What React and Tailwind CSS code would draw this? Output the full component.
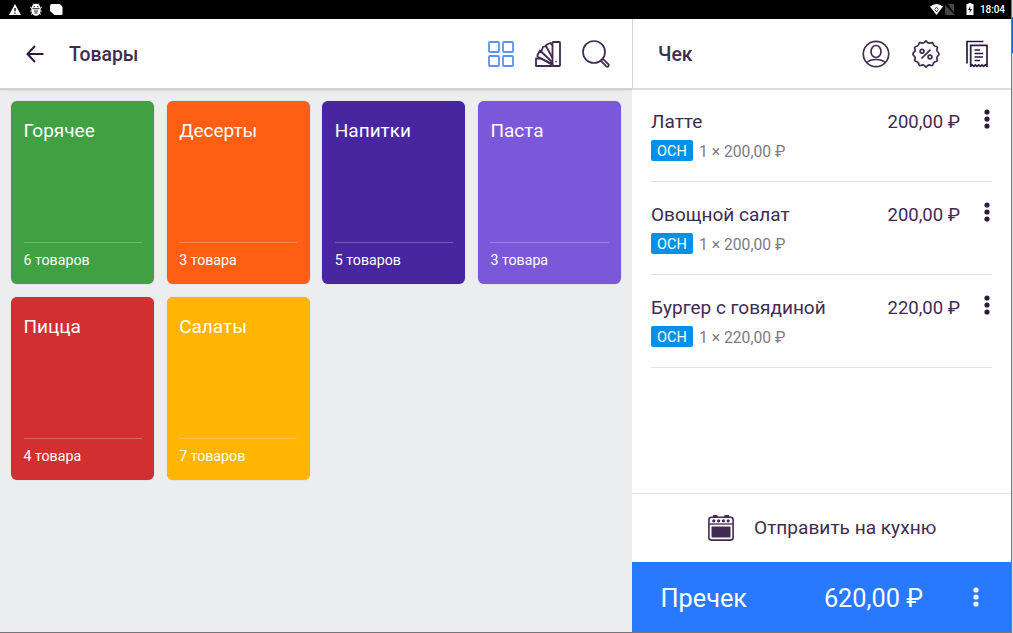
const categories = [
  { name: "Горячее", count: "6 товаров", color: "bg-[#3fa142]" },
  { name: "Десерты", count: "3 товара", color: "bg-[#ff5e14]" },
  { name: "Напитки", count: "5 товаров", color: "bg-[#47269f]" },
  { name: "Паста", count: "3 товара", color: "bg-[#7a58d8]" },
  { name: "Пицца", count: "4 товара", color: "bg-[#d23030]" },
  { name: "Салаты", count: "7 товаров", color: "bg-[#ffb502]" },
];

const receipt = [
  { name: "Латте", price: "200,00 ₽" },
  { name: "Овощной салат", price: "200,00 ₽" },
  { name: "Бургер с говядиной", price: "220,00 ₽" },
];

function StatusBar() {
  return (
    <div className="h-[19px] shrink-0 bg-black flex items-center justify-between pl-[9px] pr-[6px] text-white">
      <div className="flex items-center">
        <svg width="12" height="11" viewBox="0 0 12 11">
          <path d="M6 0L12 11H0Z" fill="#fff" />
          <path d="M6 4V7.2M6 8.4V9.7" stroke="#000" strokeWidth="1.3" />
        </svg>
        <svg className="ml-[9px]" width="12" height="13" viewBox="0 0 12 13">
          <path d="M3 .5L4.5 2M9 .5L7.5 2M.3 4.5L2 5.5M11.7 4.5L10 5.5M.3 8H11.7M1 11.5L3 10M11 11.5L9 10" stroke="#fff" strokeWidth="1" />
          <path d="M1.5 5A4.5 4.2 0 0 1 10.5 5V8.5A4.5 4.2 0 0 1 1.5 8.5Z" fill="#fff" />
          <path d="M3.5 3.7H5M7 3.7H8.5M2.5 5.7H9.5M4 8H8M4.5 10H7.5" stroke="#000" strokeWidth=".9" />
        </svg>
        <svg className="ml-2" width="13" height="11" viewBox="0 0 13 11">
          <path d="M2 0H10L12.5 3V9.5Q12.5 11 11 11H4.5L0 7V2Q0 0 2 0Z" fill="#fff" />
        </svg>
      </div>
      <div className="flex items-center">
        <svg width="13" height="11" viewBox="0 0 13 11">
          <path d="M0 2.5Q6.5 -2.5 13 2.5L6.5 11Z" fill="#fff" />
          <path d="M6.5 3L4.8 5.5L6.5 8L8.2 5.5Z" fill="none" stroke="#333" strokeWidth=".8" />
        </svg>
        <svg className="ml-0.5" width="10" height="11" viewBox="0 0 10 11">
          <path d="M0 1L10 11H1Q0 11 0 10ZM3 0H9V9Z" fill="#464646" />
        </svg>
        <svg className="ml-[11px] -mt-0.5" width="8" height="12" viewBox="0 0 8 12">
          <path d="M2.5 0H5.5V1H7.5V12H.5V1H2.5Z" fill="#fff" />
          <path d="M4.5 3L2 7H4L3.5 10L6 6H4Z" fill="#000" />
        </svg>
        <span className="ml-1.5 w-[25px] text-[10px] leading-none tracking-[-0.1px] font-medium whitespace-nowrap">18:04</span>
      </div>
    </div>
  );
}

function BackIcon() {
  return (
    <svg width="18" height="18" viewBox="0 0 18 18" fill="none" stroke="#2c1b3d" strokeWidth="2">
      <path d="M17.5 9H1.5M9 1L1.5 9L9 17" />
    </svg>
  );
}

function GridIcon() {
  return (
    <svg width="26" height="26" viewBox="0 0 26 26" fill="none" stroke="#5b93f0" strokeWidth="1.8">
      <rect x="1" y="1" width="10" height="10" rx="1" />
      <rect x="15" y="1" width="10" height="10" rx="1" />
      <rect x="1" y="15" width="10" height="10" rx="1" />
      <rect x="15" y="15" width="10" height="10" rx="1" />
    </svg>
  );
}

function PaletteIcon() {
  return (
    <svg width="26" height="26" viewBox="0 0 26 26" fill="none" stroke="#412b50" strokeWidth="1.8" strokeLinejoin="round">
      <rect x="17.5" y="1" width="7.5" height="24" rx=".7" />
      <path d="M17.5 25H1V17.5H6L17.5 24" />
      <path d="M2.5 16V14L5 9.5L16.5 20.5L17.5 23L3 16" />
      <path d="M6.5 10L8 6L11 5L17.5 17" />
      <path d="M10.5 5L12 3.5L15.500 2L17.5 4" />
      <circle cx="21.1" cy="20.8" r=".8" fill="#412b50" stroke="none" />
    </svg>
  );
}

function SearchIcon() {
  return (
    <svg width="28" height="28" viewBox="0 0 28 28" fill="none" stroke="#412b50" strokeWidth="1.7">
      <circle cx="12" cy="12" r="11" />
      <path d="M18.7 20.7L20.7 18.7L26.5 24.3Q27.2 25.4 26.3 26.3Q25.3 27.2 24.3 26.3Z" />
    </svg>
  );
}

function UserIcon() {
  return (
    <svg width="28" height="28" viewBox="0 0 28 28" fill="none" stroke="#412b50" strokeWidth="1.7">
      <circle cx="14" cy="14" r="12.7" />
      <ellipse cx="14" cy="11.5" rx="5" ry="6" />
      <path d="M5 22.5Q8 19.5 14 19.5T23 22.5" />
    </svg>
  );
}

function DiscountIcon() {
  return (
    <svg width="28" height="28" viewBox="0 0 28 28" fill="none" stroke="#412b50" strokeWidth="1.7" strokeLinejoin="round">
      <path d="M14 .9Q16 3.3 17.4 3.1Q19 2.5 20.6 2.6Q21.2 5.3 22.6 6Q24.8 6.5 25.4 7.4Q24.7 9.8 25 11Q27 13 27.1 14Q26.8 15.2 25 17Q24.7 18.3 25.4 20.6Q24.5 21.7 22.5 22Q21.3 22.8 20.6 25.4Q19.4 25.7 17.2 24.9Q15.8 25.2 14 27.1Q12.3 25 10.8 24.9Q8.8 25.8 7.4 25.4Q6.8 23 5.5 22Q3.3 21.6 2.6 20.6Q3.3 18.5 3 17Q1.2 15.3 .9 14Q1.2 12.6 3 11Q3.3 9.5 2.6 7.4Q3.2 6.5 5.4 6Q6.8 5.2 7.4 2.6Q8.8 2.4 10.6 3.1Q12 3.2 14 .9Z" />
      <path d="M18.5 9.7L9.5 18.5" />
      <circle cx="10" cy="11.2" r="1.9" />
      <circle cx="18" cy="17" r="1.9" />
    </svg>
  );
}

function ReceiptIcon() {
  return (
    <svg width="22" height="28" viewBox="0 0 22 28" fill="none" stroke="#2c1b3d" strokeWidth="1.7">
      <path d="M1 23.5V1.5H17.5" />
      <path d="M4.7 27V5.3H21V27M4.7 26L6.2 24.8L7.8 26.3L9.4 24.8L11 26.3L12.7 24.8L14.3 26.3L16 24.8L17.6 26.3L19.3 24.8L21 26" />
      <path d="M8.5 10H14M8.5 13.5H17M8.5 17H17M8.5 20.5H14" />
    </svg>
  );
}

function OvenIcon() {
  return (
    <svg width="26" height="26" viewBox="0 0 26 26" fill="none" stroke="#412b50" strokeWidth="1.6">
      <rect x=".9" y="2.2" width="24.2" height="22.9" rx="2.5" />
      <path d="M5 1H9.5M16.5 1H21" strokeWidth="2" />
      <path d="M1 9H25" strokeWidth="1.3" />
      <g fill="#412b50" stroke="none">
        <circle cx="5.8" cy="5.8" r="1.6" />
        <circle cx="10.6" cy="5.8" r="1.6" />
        <circle cx="15.4" cy="5.8" r="1.6" />
        <circle cx="20.2" cy="5.8" r="1.6" />
        <rect x="3.5" y="11.5" width="19" height="11" rx="1" />
      </g>
    </svg>
  );
}

function Dots({ className }) {
  return (
    <svg className={className} width="6" height="20" viewBox="0 0 6 20" fill="currentColor">
      <circle cx="3" cy="3" r="2.6" />
      <circle cx="3" cy="10" r="2.6" />
      <circle cx="3" cy="17" r="2.6" />
    </svg>
  );
}

function CategoryCard({ name, count, color }) {
  return (
    <div className={`${color} h-[183px] rounded-[6px] px-[12.5px] flex flex-col justify-between text-white shadow-[0_0_1px_rgba(0,0,0,0.3)]`}>
      <div className="pt-[18px] text-[19px] leading-6">{name}</div>
      <div className="h-[42px] border-t border-white/25 pt-[7px] text-[14.2px] leading-5">{count}</div>
    </div>
  );
}

function ReceiptRow({ name, price }) {
  return (
    <div className="h-[93px] border-b border-[#e2e2e4] flex justify-between">
      <div className="pt-[21px]">
        <div className="text-[19px] leading-6">{name}</div>
        <div className="mt-[5px] flex items-center">
          <span className="w-[42px] h-[21px] rounded-[2px] bg-[#0290e8] text-white text-[14.5px] leading-[23px] text-center">ОСН</span>
          <span className="ml-1.5 pt-[3px] text-[15.7px] leading-5 text-[#817987]">1 × {price}</span>
        </div>
      </div>
      <div className="flex">
        <div className="pt-[21px] text-[18.5px] leading-6">{price}</div>
        <Dots className="mt-[19.5px] ml-6 mr-0.5 text-[#2c1b3d]" />
      </div>
    </div>
  );
}

export default function App() {
  return (
    <div className="w-[1013px] h-[633px] flex overflow-hidden bg-[#dededf] font-['Roboto',sans-serif] text-[#412b50]">
      <div className="w-[1012px] border-r border-b border-[#77777a] flex flex-col">
        <StatusBar />
        <div className="flex-1 flex min-h-0">
          {/* Catalog */}
          <main className="w-[632px] shrink-0 bg-[#ebedef] flex flex-col">
            <header className="h-[71px] shrink-0 bg-white border-b-2 border-[#cfd0d2] shadow-[0_1px_2px_rgba(0,0,0,0.08)] pl-[26px] pr-[22px] flex items-center">
              <BackIcon />
              <h1 className="ml-[25px] pt-0.5 text-[19.4px] leading-6 font-medium">Товары</h1>
              <div className="ml-auto flex items-center gap-[21px]">
                <GridIcon />
                <PaletteIcon />
                <SearchIcon />
              </div>
            </header>
            <div className="grid grid-cols-4 gap-x-[12.6px] gap-y-[13px] pl-[11px] pr-[11px] pt-[11px]">
              {categories.map((c) => (
                <CategoryCard key={c.name} {...c} />
              ))}
            </div>
          </main>

          {/* Receipt */}
          <aside className="flex-1 bg-white flex flex-col">
            <header className="h-[71px] shrink-0 border-b-2 border-l border-b-[#dcdcde] border-l-[#d4d4d6] pl-[25px] pr-[23.5px] flex items-center">
              <h2 className="pt-0.5 text-[19.4px] leading-6 font-medium">Чек</h2>
              <div className="ml-auto flex items-center">
                <UserIcon />
                <span className="ml-[22px]"><DiscountIcon /></span>
                <span className="ml-[26px]"><ReceiptIcon /></span>
              </div>
            </header>
            <div className="flex-1 pl-[19px] pr-[19px] -mt-px">
              {receipt.map((r) => (
                <ReceiptRow key={r.name} {...r} />
              ))}
            </div>
            <button className="h-[69px] shrink-0 border-t border-[#e0e0e2] pl-[76px] flex items-center">
              <OvenIcon />
              <span className="ml-5 text-[19.1px] leading-6">Отправить на кухню</span>
            </button>
            <div className="h-[70px] shrink-0 bg-[#2979ff] text-white text-[25.3px] pl-[28.5px] pr-8 pt-[3px] flex items-center justify-between">
              <span>Пречек</span>
              <div className="flex items-center">
                <span>620,00 ₽</span>
                <Dots className="ml-[50px] -mt-[3px]" />
              </div>
            </div>
          </aside>
        </div>
      </div>
      <div className="w-px mt-[17px] h-9 bg-[#1268dc]" />
    </div>
  );
}
